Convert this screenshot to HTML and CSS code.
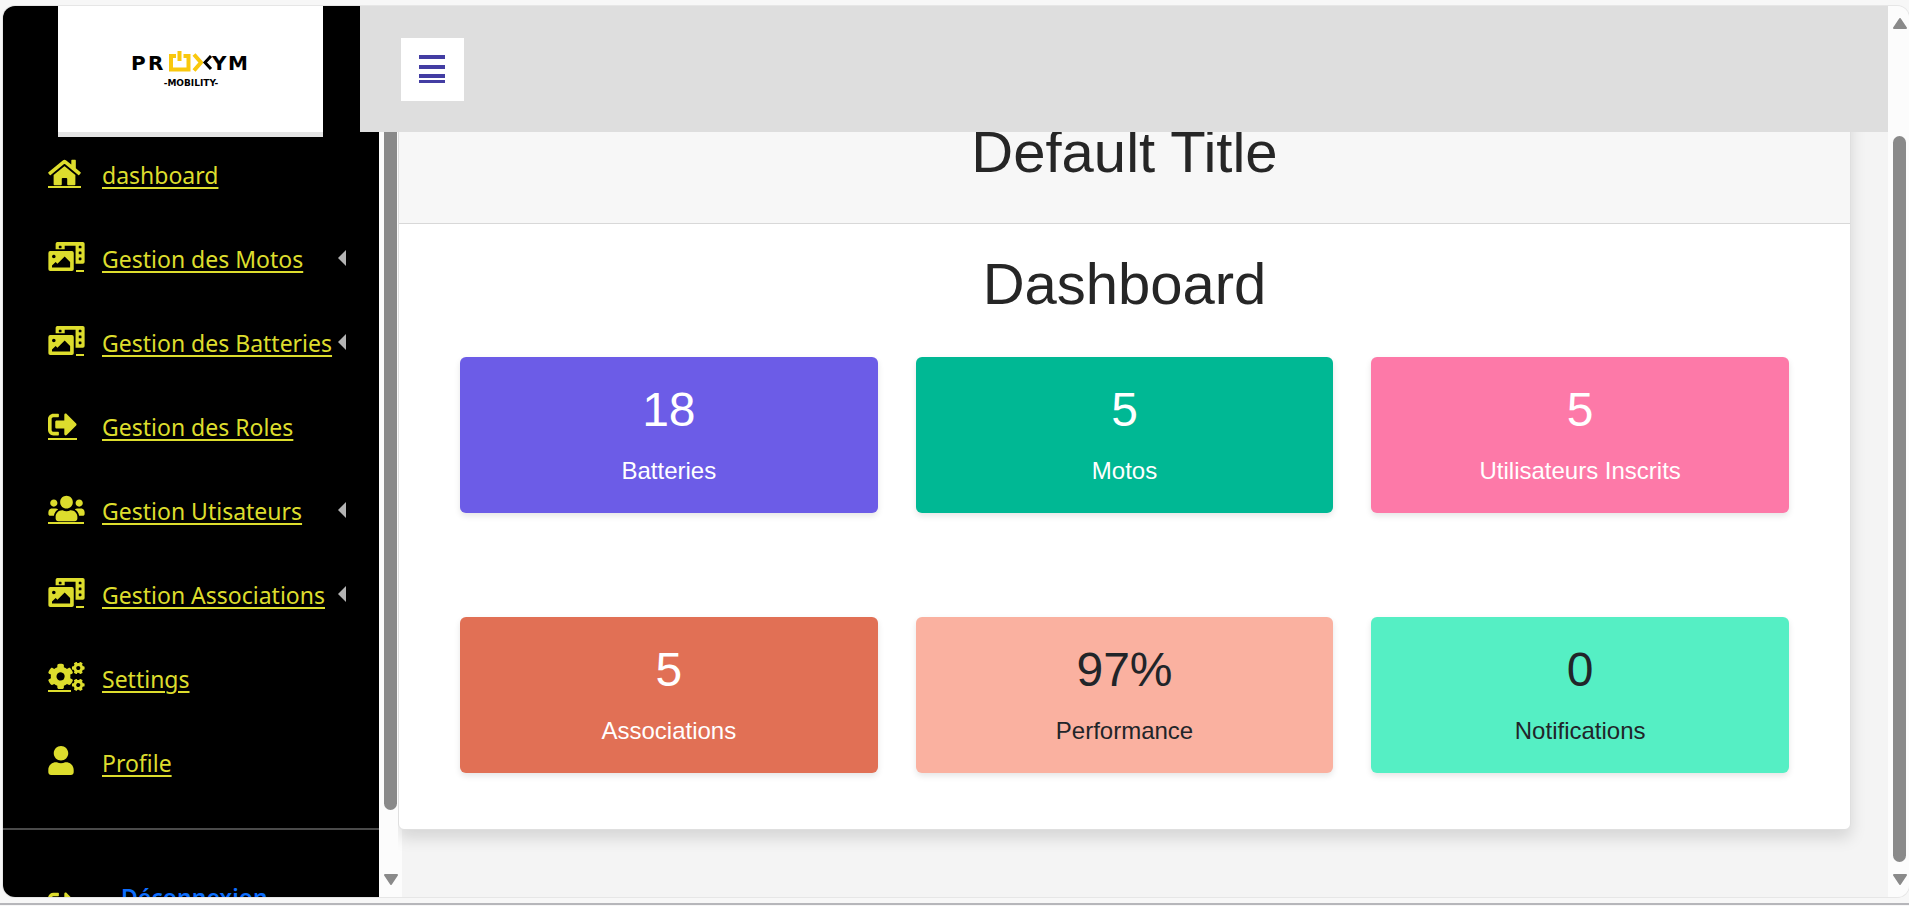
FILE: index.html
```html
<!DOCTYPE html>
<html lang="fr">
<head>
<meta charset="utf-8">
<title>Proxym Mobility - Dashboard</title>
<link rel="stylesheet" href="styles.css">
</head>
<body>
<svg class="sprite" aria-hidden="true">
  <symbol id="home" viewBox="0 0 576 512"><path d="M280.37 148.26L96 300.11V464a16 16 0 0 0 16 16l112.06-.29a16 16 0 0 0 15.92-16V368a16 16 0 0 1 16-16h64a16 16 0 0 1 16 16v95.64a16 16 0 0 0 16 16.05L464 480a16 16 0 0 0 16-16V300L295.67 148.26a12.19 12.19 0 0 0-15.3 0zM571.6 251.47L488 182.56V44.05a12 12 0 0 0-12-12h-56a12 12 0 0 0-12 12v72.61L318.47 43a48 48 0 0 0-61 0L4.34 251.47a12 12 0 0 0-1.6 16.9l25.5 31A12 12 0 0 0 45.15 301l235.22-193.74a12.19 12.19 0 0 1 15.3 0L530.9 301a12 12 0 0 0 16.9-1.6l25.5-31a12 12 0 0 0-1.7-16.93z"/></symbol>
  <symbol id="media" viewBox="0 0 640 512"><path d="M608 0H160a32 32 0 0 0-32 32v96h160V64h192v320h128a32 32 0 0 0 32-32V32a32 32 0 0 0-32-32zM232 103a9 9 0 0 1-9 9h-30a9 9 0 0 1-9-9V73a9 9 0 0 1 9-9h30a9 9 0 0 1 9 9zm352 208a9 9 0 0 1-9 9h-30a9 9 0 0 1-9-9v-30a9 9 0 0 1 9-9h30a9 9 0 0 1 9 9zm0-104a9 9 0 0 1-9 9h-30a9 9 0 0 1-9-9v-30a9 9 0 0 1 9-9h30a9 9 0 0 1 9 9zm0-104a9 9 0 0 1-9 9h-30a9 9 0 0 1-9-9V73a9 9 0 0 1 9-9h30a9 9 0 0 1 9 9zm-168 57H32a32 32 0 0 0-32 32v288a32 32 0 0 0 32 32h384a32 32 0 0 0 32-32V192a32 32 0 0 0-32-32zM96 224a32 32 0 1 1-32 32 32 32 0 0 1 32-32zm288 224H64v-32l64-64 32 32 128-128 96 96z"/></symbol>
  <symbol id="exit" viewBox="0 0 512 512"><path d="M497 273L329 441c-15 15-41 4.5-41-17v-96H152c-13.3 0-24-10.7-24-24v-96c0-13.3 10.7-24 24-24h136V88c0-21.4 25.9-32 41-17l168 168c9.3 9.4 9.3 24.6 0 34zM192 436v-40c0-6.6-5.4-12-12-12H96c-17.7 0-32-14.3-32-32V160c0-17.7 14.3-32 32-32h84c6.6 0 12-5.4 12-12V76c0-6.6-5.4-12-12-12H96c-53 0-96 43-96 96v192c0 53 43 96 96 96h84c6.6 0 12-5.4 12-12z"/></symbol>
  <symbol id="users" viewBox="0 0 640 512"><path d="M96 224c35.3 0 64-28.7 64-64s-28.7-64-64-64-64 28.7-64 64 28.7 64 64 64zm448 0c35.3 0 64-28.7 64-64s-28.7-64-64-64-64 28.7-64 64 28.7 64 64 64zm32 32h-64c-17.6 0-33.5 7.1-45.1 18.6 40.3 22.1 68.9 62 75.1 109.4h66c17.7 0 32-14.3 32-32v-32c0-35.3-28.7-64-64-64zm-256 0c61.9 0 112-50.1 112-112S381.9 32 320 32 208 82.1 208 144s50.1 112 112 112zm76.8 32h-8.3c-20.8 10-43.9 16-68.5 16s-47.6-6-68.5-16h-8.3C179.6 288 128 339.6 128 403.2V432c0 26.5 21.5 48 48 48h288c26.5 0 48-21.5 48-48v-28.8c0-63.6-51.6-115.2-115.2-115.2zm-223.7-13.4C161.5 263.1 145.6 256 128 256H64c-35.3 0-64 28.7-64 64v32c0 17.7 14.3 32 32 32h65.9c6.3-47.4 34.9-87.3 75.2-109.4z"/></symbol>
  <symbol id="cogs" viewBox="0 0 640 512"><path id="cog-small" d="M512.1 191l-8.2 14.3c-3 5.3-9.4 7.5-15.1 5.4-11.8-4.4-22.6-10.7-32.1-18.6-4.6-3.8-5.8-10.5-2.8-15.7l8.2-14.3c-6.9-8-12.3-17.3-15.9-27.4h-16.5c-6 0-11.2-4.3-12.2-10.3-2-12-2.1-24.6 0-37.1 1-6 6.2-10.4 12.2-10.4h16.5c3.6-10.1 9-19.4 15.9-27.4l-8.2-14.3c-3-5.2-1.9-11.9 2.8-15.7 9.5-7.9 20.4-14.2 32.1-18.6 5.7-2.1 12.1.1 15.1 5.4l8.2 14.3c10.5-1.9 21.2-1.9 31.7 0L552 6.3c3-5.3 9.4-7.5 15.1-5.4 11.8 4.4 22.6 10.7 32.1 18.6 4.6 3.8 5.8 10.5 2.8 15.7l-8.2 14.3c6.9 8 12.3 17.3 15.9 27.4h16.5c6 0 11.2 4.3 12.2 10.3 2 12 2.1 24.6 0 37.1-1 6-6.2 10.4-12.2 10.4h-16.5c-3.6 10.1-9 19.4-15.9 27.4l8.2 14.3c3 5.2 1.9 11.9-2.8 15.7-9.5 7.9-20.4 14.2-32.1 18.6-5.7 2.1-12.1-.1-15.1-5.4l-8.2-14.3c-10.4 1.9-21.2 1.9-31.7 0zm-10.5-58.8c38.5 29.6 82.4-14.3 52.8-52.8-38.5-29.7-82.4 14.3-52.8 52.8z"/><use href="#cog-small" y="299"/><path d="M386.3 286.1l33.7 16.8c10.1 5.8 14.5 18.1 10.5 29.1-8.9 24.2-26.4 46.4-42.6 65.8-7.4 8.9-20.2 11.1-30.3 5.3l-29.1-16.8c-16 13.7-34.6 24.6-54.9 31.7v33.6c0 11.6-8.3 21.6-19.7 23.6-24.6 4.2-50.4 4.4-75.9 0-11.5-2-20-11.9-20-23.6V418c-20.3-7.2-38.9-18-54.9-31.7L74 403c-10 5.8-22.9 3.6-30.3-5.3-16.2-19.4-33.3-41.6-42.2-65.7-4-10.9.4-23.2 10.5-29.1l33.3-16.8c-3.9-20.9-3.9-42.4 0-63.4L12 205.8c-10.1-5.8-14.6-18.1-10.5-29 8.9-24.2 26-46.4 42.2-65.8 7.4-8.9 20.2-11.1 30.3-5.3l29.1 16.8c16-13.7 34.6-24.6 54.9-31.7V57.1c0-11.5 8.2-21.5 19.6-23.5 24.6-4.2 50.5-4.4 76-.1 11.5 2 20 11.9 20 23.6v33.6c20.3 7.2 38.9 18 54.9 31.7l29.1-16.8c10-5.8 22.9-3.6 30.3 5.3 16.2 19.4 33.2 41.6 42.1 65.8 4 10.9.1 23.2-10 29.1l-33.7 16.8c3.9 21 3.9 42.5 0 63.5zm-117.6 21.1c59.2-77-28.7-164.9-105.7-105.7-59.2 77 28.7 164.9 105.7 105.7z"/></symbol>
  <symbol id="user" viewBox="0 0 448 512"><path d="M224 256c70.7 0 128-57.3 128-128S294.7 0 224 0 96 57.3 96 128s57.3 128 128 128zm89.6 32h-16.7c-22.2 10.2-46.9 16-72.9 16s-50.6-5.8-72.9-16h-16.7C60.2 288 0 348.2 0 422.4V464c0 26.5 21.5 48 48 48h352c26.5 0 48-21.5 48-48v-41.6c0-74.2-60.2-134.4-134.4-134.4z"/></symbol>
</svg>

<div class="app">
  <aside class="sidebar">
    <a class="brand" href="#" aria-label="Proxym Mobility">
      <svg class="logo" viewBox="0 0 118 36" width="118" height="36">
        <g class="logo-name"><text x="-1 16" y="19">PR</text><text x="80 96" y="19">YM</text></g>
        <path class="logo-gold" d="M44 5H39V18.500H56.500V5H51.500M47.500 0V10"/>
        <path class="logo-gold" d="M62 3.500L69 11.500L62 19.500"/>
        <path class="logo-dark" d="M79 5L73 11.500L79 18"/>
        <text class="logo-sub" x="59" y="35" text-anchor="middle">-MOBILITY-</text>
      </svg>
    </a>
    <nav class="menu">
      <a class="item" href="#"><span class="icon"><svg width="33" height="29"><use href="#home"/><rect y="28" width="33" height="2"/></svg></span><span class="label">dashboard</span></a>
      <a class="item" href="#"><span class="icon"><svg width="37" height="29"><use href="#media"/><rect x="28" y="28" width="8" height="2"/></svg></span><span class="label">Gestion des Motos</span><span class="caret"></span></a>
      <a class="item" href="#"><span class="icon"><svg width="37" height="29"><use href="#media"/><rect x="28" y="28" width="8" height="2"/></svg></span><span class="label">Gestion des Batteries</span><span class="caret"></span></a>
      <a class="item" href="#"><span class="icon"><svg width="29" height="29"><use href="#exit"/><rect y="28" width="29" height="2"/></svg></span><span class="label">Gestion des Roles</span></a>
      <a class="item" href="#"><span class="icon"><svg width="37" height="29"><use href="#users"/><rect y="28" width="36" height="2"/></svg></span><span class="label">Gestion Utisateurs</span><span class="caret"></span></a>
      <a class="item" href="#"><span class="icon"><svg width="37" height="29"><use href="#media"/><rect x="28" y="28" width="8" height="2"/></svg></span><span class="label">Gestion Associations</span><span class="caret"></span></a>
      <a class="item" href="#"><span class="icon"><svg width="37" height="29"><use href="#cogs"/><rect y="28" width="23" height="2"/></svg></span><span class="label">Settings</span></a>
      <a class="item" href="#"><span class="icon"><svg width="26" height="29"><use href="#user"/></svg></span><span class="label">Profile</span></a>
    </nav>
    <div class="session">
      <span class="icon"><svg width="29" height="29"><use href="#exit"/></svg></span>
      <a class="logout" href="#">Déconnexion</a>
    </div>
  </aside>

  <div class="track track-side" aria-hidden="true">
    <div class="thumb"></div>
    <svg class="arrow" viewBox="0 0 14 11"><path d="M1 1h12l-6 9z"/></svg>
  </div>

  <header class="topbar">
    <button class="toggle" type="button" aria-label="Menu">
      <svg width="27" height="28" viewBox="0 0 27 28"><path d="M0 0h26v4H0zM0 10h26v4H0zM0 19h26v4H0zM0 25h26v3H0z"/></svg>
    </button>
  </header>

  <main class="content">
    <section class="panel">
      <div class="panel-head"><h1 class="title">Default Title</h1></div>
      <div class="panel-body">
        <h2 class="title">Dashboard</h2>
        <div class="tiles">
          <div class="tile violet"><span class="value">18</span><span class="name">Batteries</span></div>
          <div class="tile green"><span class="value">5</span><span class="name">Motos</span></div>
          <div class="tile pink"><span class="value">5</span><span class="name">Utilisateurs Inscrits</span></div>
          <div class="tile orange"><span class="value">5</span><span class="name">Associations</span></div>
          <div class="tile peach"><span class="value">97%</span><span class="name">Performance</span></div>
          <div class="tile mint"><span class="value">0</span><span class="name">Notifications</span></div>
        </div>
      </div>
    </section>
  </main>

  <div class="track track-page" aria-hidden="true">
    <svg class="arrow" viewBox="0 0 14 11"><path d="M1 10h12l-6 -9z"/></svg>
    <div class="thumb"></div>
    <svg class="arrow" viewBox="0 0 14 11"><path d="M1 1h12l-6 9z"/></svg>
  </div>
</div>
<div class="edge"></div>
</body>
</html>
```
FILE: styles.css
```css
* { box-sizing: border-box; }

body {
  margin: 0;
  height: 100vh;
  display: flex;
  flex-direction: column;
  overflow: hidden;
  background: #f7f7f7;
  color: #212529;
  font-family: "Liberation Sans", Arial, sans-serif;
}

.sprite { display: none; }

.app {
  flex: 1;
  min-height: 0;
  margin: 6px 0 0 3px;
  display: grid;
  grid-template-columns: 376px 23px minmax(0, 1fr) 21px;
  grid-template-rows: 126px minmax(0, 1fr);
  border-radius: 12px;
  overflow: hidden;
  background: #f4f4f4;
  box-shadow: 0 0 0 1px #e6e6e6;
}

.edge {
  height: 2px;
  margin: 6px 0 1px;
  background: #b6b6ba;
}

/* Sidebar */
.sidebar {
  grid-column: 1;
  grid-row: 1 / 3;
  overflow: hidden;
  background: #000;
  font: 23px/36px "Noto Sans", sans-serif;
}

.brand {
  display: flex;
  align-items: center;
  justify-content: center;
  height: 131px;
  margin: 0 56px -5px 55px;
  background: #fff;
  border-bottom: 5px solid #e4e4e4;
}

.logo { overflow: visible; }
.logo-name { font: bold 20px "DejaVu Sans", sans-serif; }
.logo-sub { font: bold 9px "DejaVu Sans", sans-serif; }
.logo-gold { fill: none; stroke: #f9c80e; stroke-width: 4; }
.logo-dark { fill: none; stroke: #000; stroke-width: 3; }

.item {
  display: flex;
  align-items: center;
  height: 84px;
  padding: 0 33px 0 45px;
  color: #dddd2d;
  text-decoration: none;
}

.icon {
  flex: 0 0 54px;
  display: flex;
  padding-bottom: 3px;
  color: #dddd2d;
}

.icon svg {
  overflow: visible;
  fill: currentColor;
}

.label {
  padding-top: 2px;
  white-space: nowrap;
  text-decoration: underline;
  text-decoration-thickness: 2px;
  text-underline-offset: 3px;
}

.caret {
  flex: none;
  margin-left: auto;
  border: solid transparent;
  border-width: 8px 8px 8px 0;
  border-right-color: #b4b4b4;
}

.session {
  display: flex;
  align-items: center;
  gap: 19px;
  margin-top: 24px;
  padding: 45px 45px;
  border-top: 2px solid #4a4a4a;
}

.session .icon { padding: 14px 0 0; }

.logout {
  color: #0d6efd;
  font-weight: 600;
}

/* Scroll tracks */
.track {
  display: flex;
  flex-direction: column;
  align-items: center;
  background: #fcfcfc;
}

.track-side {
  grid-column: 2;
  grid-row: 2;
  padding-bottom: 12px;
}

.track-page {
  grid-column: 4;
  grid-row: 1 / 3;
  padding: 12px 0 12px 2px;
}

.thumb {
  flex: 1;
  width: 13px;
  background: #8a8a8a;
}

.track-side .thumb {
  margin-bottom: 64px;
  border-radius: 0 0 7px 7px;
}

.track-page .thumb {
  margin: 107px 0 12px;
  border-radius: 7px;
}

.arrow {
  width: 14px;
  height: 11px;
  fill: #8a8a8a;
  stroke: #8a8a8a;
  stroke-width: 2;
  stroke-linejoin: round;
}

/* Top bar overlaps the edge of the sidebar */
.topbar {
  grid-column: 1 / 4;
  grid-row: 1;
  display: flex;
  align-items: center;
  margin-left: 357px;
  padding: 0 41px;
  background: #dedede;
}

.toggle {
  display: grid;
  place-items: center;
  width: 63px;
  height: 63px;
  padding: 0;
  border: 0;
  background: #fff;
  fill: #433da3;
}

/* Content */
.content {
  grid-column: 2 / 4;
  grid-row: 2;
  margin-left: 19px;
  overflow: hidden;
}

.panel {
  margin: -52px 37px 0 0;
  border: 1px solid #dfdfdf;
  border-radius: 6px;
  background: #fff;
  box-shadow: 0 8px 16px rgba(0, 0, 0, 0.13);
}

.panel-head {
  padding: 36px 16px;
  background: #f7f7f7;
  border-bottom: 1px solid #d8d8d8;
}

.title {
  margin: 0;
  font-size: 58px;
  line-height: 70px;
  font-weight: 400;
  text-align: center;
  color: #262626;
}

.panel-body { padding: 25px 61px 56px; }

.tiles {
  display: grid;
  grid-template-columns: repeat(3, minmax(0, 1fr));
  gap: 104px 38px;
  margin-top: 38px;
}

.tile {
  display: flex;
  flex-direction: column;
  align-items: center;
  gap: 14px;
  padding: 24px;
  border-radius: 6px;
  box-shadow: 0 3px 6px rgba(0, 0, 0, 0.1);
}

.value { font-size: 48px; line-height: 58px; }
.name { font-size: 24px; line-height: 36px; }

.violet { background: #6c5ce7; color: #fff; }
.green { background: #00b894; color: #fff; }
.pink { background: #fd79a8; color: #fff; }
.orange { background: #e17055; color: #fff; }
.peach { background: #fab1a0; }
.mint { background: #55efc4; }
```
